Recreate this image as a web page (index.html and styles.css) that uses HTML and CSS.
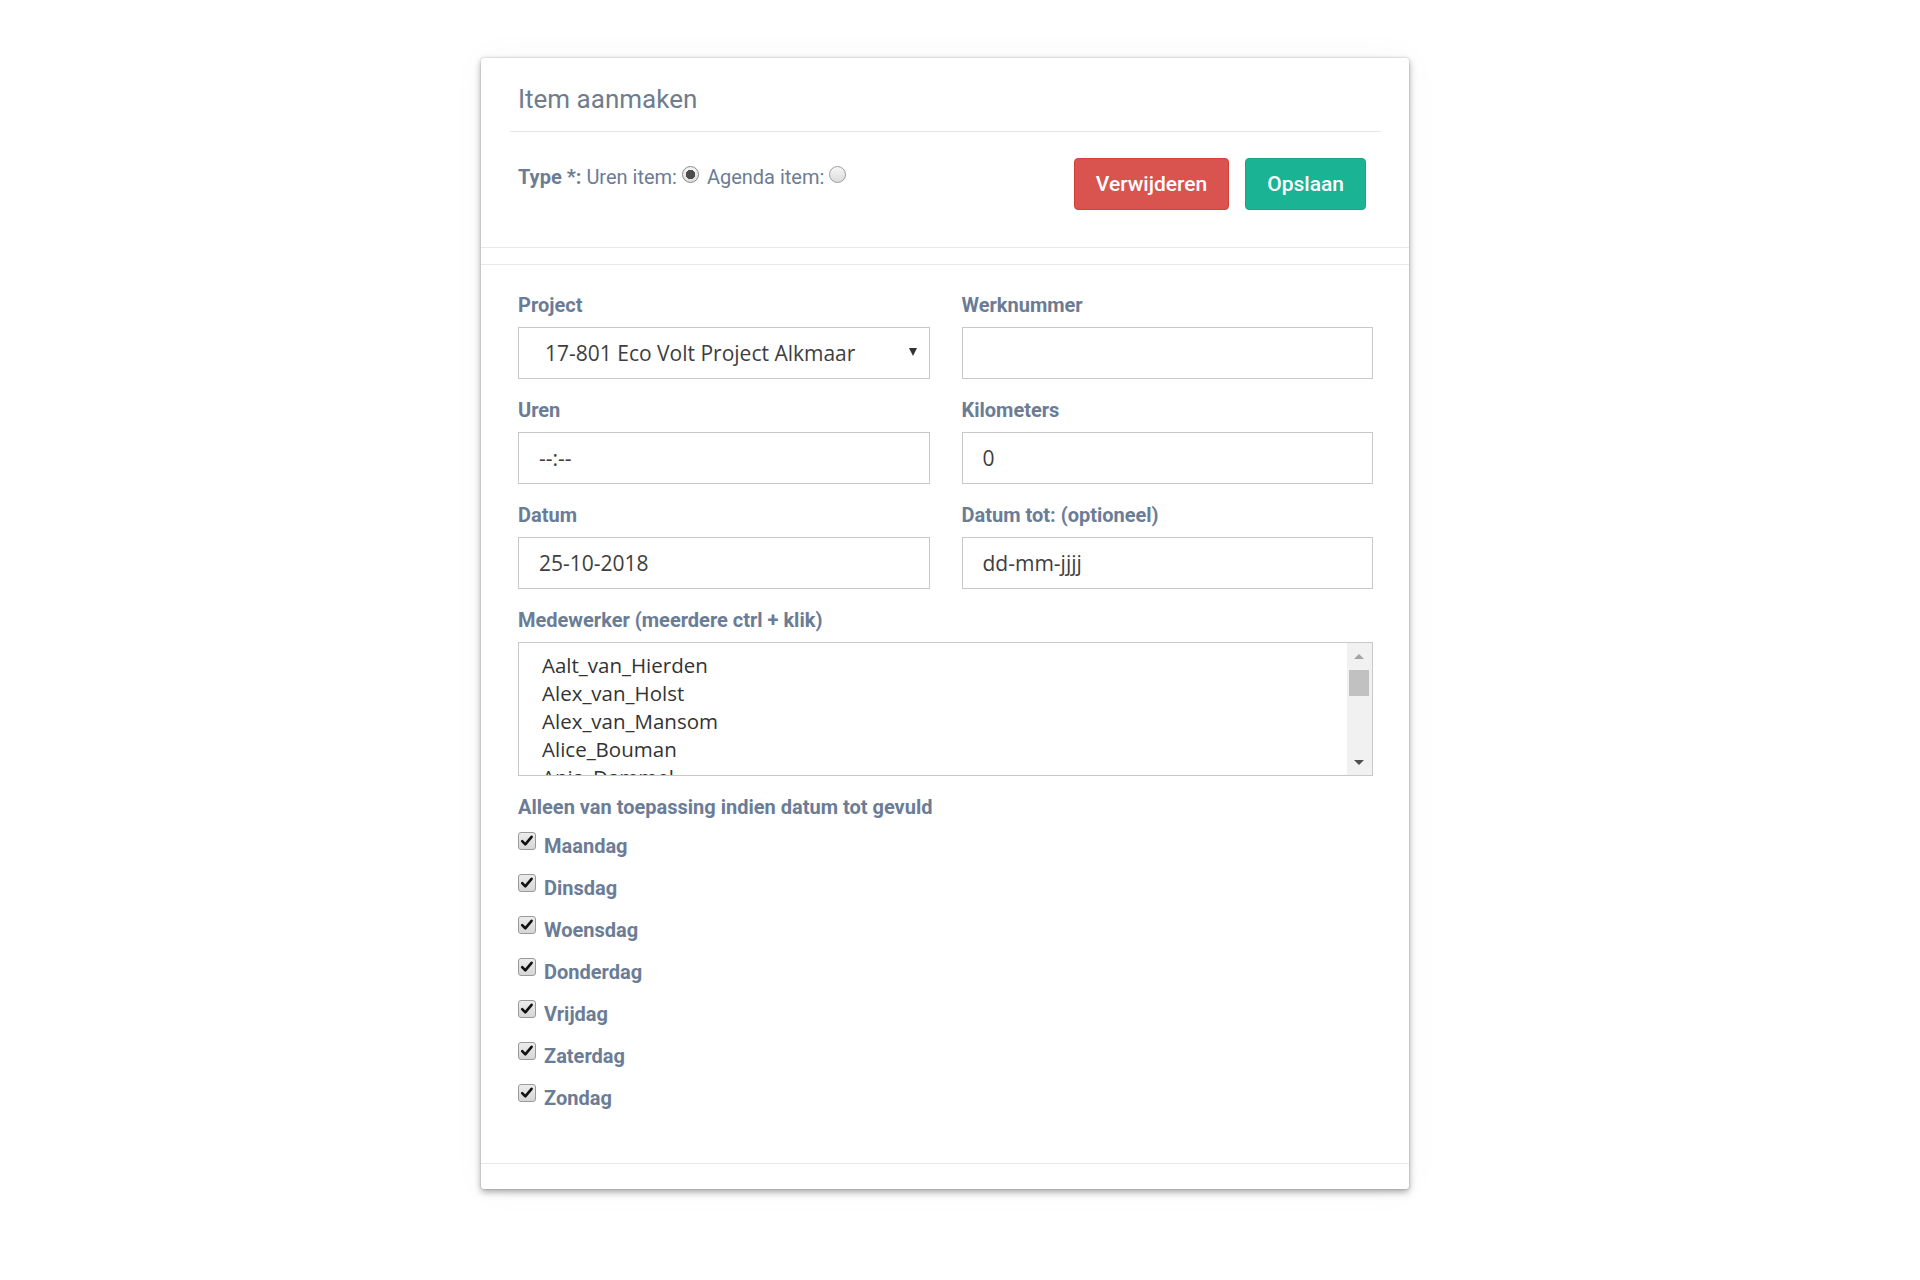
FILE: index.html
```html
<!DOCTYPE html>
<html lang="nl">
<head>
  <meta charset="UTF-8" />
  <meta name="viewport" content="width=device-width, initial-scale=1" />
  <title>Item aanmaken</title>
  <link rel="stylesheet" href="styles.css">
</head>
<body>
  <div class="page">
    <main class="card" aria-label="Item aanmaken">
      <section class="card-head">
        <h5 class="card-title">Item aanmaken</h5>
        <div class="type-row">
          <div class="type-choice">
            <b>Type *:</b> Uren item: <input type="radio" name="type" class="radio" checked aria-label="Uren item"> Agenda item: <input type="radio" name="type" class="radio" aria-label="Agenda item">
          </div>
          <div class="actions">
            <button type="button" class="btn btn-danger">Verwijderen</button>
            <button type="button" class="btn btn-primary">Opslaan</button>
          </div>
        </div>
      </section>

      <section class="card-body">
        <div class="form-grid">
          <div class="field">
            <label class="label">Project</label>
            <div class="select" role="combobox" aria-expanded="false">
              <span>17-801 Eco Volt Project Alkmaar</span>
              <span class="caret"></span>
            </div>
          </div>
          <div class="field">
            <label class="label" for="werknummer">Werknummer</label>
            <input class="input" id="werknummer" type="text" value="">
          </div>

          <div class="field">
            <label class="label" for="uren">Uren</label>
            <input class="input" id="uren" type="text" value="--:--">
          </div>
          <div class="field">
            <label class="label" for="km">Kilometers</label>
            <input class="input" id="km" type="text" value="0">
          </div>

          <div class="field">
            <label class="label" for="datum">Datum</label>
            <input class="input" id="datum" type="text" value="25-10-2018">
          </div>
          <div class="field">
            <label class="label" for="datum-tot">Datum tot: (optioneel)</label>
            <input class="input" id="datum-tot" type="text" value="dd-mm-jjjj">
          </div>
        </div>

        <div class="field">
          <label class="label">Medewerker (meerdere ctrl + klik)</label>
          <div class="listbox" role="listbox" aria-multiselectable="true">
            <div class="options">
              <div class="option">Aalt_van_Hierden</div>
              <div class="option">Alex_van_Holst</div>
              <div class="option">Alex_van_Mansom</div>
              <div class="option">Alice_Bouman</div>
              <div class="option">Anja_Dammel</div>
            </div>
            <div class="scrollbar" aria-hidden="true">
              <div class="scroll-btn"><span class="tri-up"></span></div>
              <div class="thumb"></div>
              <div class="track"></div>
              <div class="scroll-btn"><span class="tri-down"></span></div>
            </div>
          </div>
        </div>

        <div class="days">
          <div class="label">Alleen van toepassing indien datum tot gevuld</div>
          <label class="day"><span class="check"><svg viewBox="0 0 18 18" width="18" height="18"><path d="M4.2 9.2 L7.3 12.4 L13.6 4.8" /></svg></span>Maandag</label>
          <label class="day"><span class="check"><svg viewBox="0 0 18 18" width="18" height="18"><path d="M4.2 9.2 L7.3 12.4 L13.6 4.8" /></svg></span>Dinsdag</label>
          <label class="day"><span class="check"><svg viewBox="0 0 18 18" width="18" height="18"><path d="M4.2 9.2 L7.3 12.4 L13.6 4.8" /></svg></span>Woensdag</label>
          <label class="day"><span class="check"><svg viewBox="0 0 18 18" width="18" height="18"><path d="M4.2 9.2 L7.3 12.4 L13.6 4.8" /></svg></span>Donderdag</label>
          <label class="day"><span class="check"><svg viewBox="0 0 18 18" width="18" height="18"><path d="M4.2 9.2 L7.3 12.4 L13.6 4.8" /></svg></span>Vrijdag</label>
          <label class="day"><span class="check"><svg viewBox="0 0 18 18" width="18" height="18"><path d="M4.2 9.2 L7.3 12.4 L13.6 4.8" /></svg></span>Zaterdag</label>
          <label class="day"><span class="check"><svg viewBox="0 0 18 18" width="18" height="18"><path d="M4.2 9.2 L7.3 12.4 L13.6 4.8" /></svg></span>Zondag</label>
        </div>
      </section>

      <div class="card-foot"></div>
    </main>
  </div>
</body>
</html>
```

FILE: styles.css
```css
/* Base */
*, *::before, *::after {
  box-sizing: border-box;
}
body {
  margin: 0;
  background: #fff;
  font-family: Roboto, "Liberation Sans", Arial, sans-serif;
  color: #6b7c96;
}
.page {
  padding: 58px 0 80px 481px;
}

/* Card */
.card {
  width: 928px;
  background: #fff;
  border-radius: 3px;
  box-shadow: 0 3px 7px rgba(0, 0, 0, 0.35), 0 0 2px rgba(0, 0, 0, 0.25), 0 0 40px rgba(0, 0, 0, 0.03);
}
.card-head {
  padding-top: 25px;
  border-bottom: 1px solid #e7eaec;
}
.card-title {
  margin: 0 28px 0 29px;
  padding: 0 0 16px 8px;
  font-size: 26px;
  line-height: 32px;
  font-weight: 400;
  color: #6f7c8d;
  border-bottom: 1px solid #e3e6ea;
}
.type-row {
  display: flex;
  justify-content: space-between;
  align-items: flex-start;
  margin-top: 26px;
  padding: 0 43px 37px 37px;
}
.type-choice {
  margin-top: 4px;
  font-size: 20px;
  line-height: 30px;
  color: #6b7c96;
}
.type-choice b {
  font-weight: 700;
}
.radio {
  appearance: none;
  -webkit-appearance: none;
  display: inline-block;
  width: 17px;
  height: 17px;
  margin: 0 3px 0 0;
  vertical-align: 1px;
  border: 1px solid #9c9c9c;
  border-radius: 50%;
  background: linear-gradient(#f6f6f6, #dcdcdc);
}
.radio:checked {
  border-color: #8a8a8a;
  background: radial-gradient(circle, #4d4d4d 0, #4d4d4d 4px, #5a5a5a 4.5px, transparent 5px), linear-gradient(#f6f6f6, #dedede);
}
.actions {
  display: flex;
  gap: 16px;
}
.btn {
  height: 52px;
  padding: 0 21px;
  border: 1px solid transparent;
  border-radius: 4px;
  font-family: Roboto, "Liberation Sans", Arial, sans-serif;
  font-size: 21px;
  font-weight: 500;
  color: #fff;
  cursor: pointer;
}
.btn-danger {
  background: #d9534f;
  border-color: #d43f3a;
}
.btn-primary {
  background: #1ab394;
  border-color: #18a689;
}

/* Body */
.card-body {
  margin-top: 16px;
  padding: 28px 36px 50px 37px;
  border-top: 1px solid #e7eaec;
  border-bottom: 1px solid #e7eaec;
}
.form-grid {
  display: grid;
  grid-template-columns: 1fr 1fr;
  column-gap: 32px;
}
.field {
  display: flex;
  flex-direction: column;
  margin-bottom: 19px;
}
.label {
  display: block;
  margin-bottom: 10px;
  font-size: 20px;
  line-height: 24px;
  font-weight: 700;
  color: #6b7c96;
}
.input,
.select {
  width: 100%;
  height: 52px;
  border: 1px solid #c9c9c9;
  background: #fff;
  font-family: "Open Sans", "Noto Sans", sans-serif;
  font-size: 21px;
  color: #3e3e3e;
}
.input {
  padding: 0 20px;
  outline: none;
}
.select {
  display: flex;
  align-items: center;
  justify-content: space-between;
  padding: 0 12px 0 26px;
}
.caret {
  width: 0;
  height: 0;
  border-left: 4.5px solid transparent;
  border-right: 4.5px solid transparent;
  border-top: 8px solid #333;
  margin-top: -2px;
}

/* Multi select */
.listbox {
  display: flex;
  height: 134px;
  border: 1px solid #c9c9c9;
  background: #fff;
}
.options {
  flex: 1;
  overflow: hidden;
  padding: 8px 0 0 23px;
  font-family: "Open Sans", "Noto Sans", sans-serif;
  font-size: 20.5px;
  line-height: 28px;
  color: #333;
}
.scrollbar {
  width: 25px;
  display: flex;
  flex-direction: column;
  background: #f1f1f1;
  padding: 0 3px 0 2px;
}
.scroll-btn {
  height: 26px;
  display: flex;
  align-items: center;
  justify-content: center;
}
.tri-up {
  border-left: 5px solid transparent;
  border-right: 5px solid transparent;
  border-bottom: 5px solid #a3a3a3;
}
.tri-down {
  border-left: 5px solid transparent;
  border-right: 5px solid transparent;
  border-top: 5px solid #4f4f4f;
}
.thumb {
  height: 26px;
  margin-top: 1px;
  background: #c1c1c1;
}
.track {
  flex: 1;
}

/* Weekdays */
.days .label {
  margin-bottom: 8px;
}
.day {
  display: flex;
  align-items: flex-start;
  gap: 8px;
  height: 30px;
  margin-top: 12px;
  font-size: 20px;
  line-height: 30px;
  font-weight: 700;
  color: #6b7c96;
}
.check {
  width: 18px;
  height: 18px;
  margin-top: 1px;
  border: 1px solid #9a9a9a;
  border-radius: 3px;
  background: linear-gradient(#ececec, #d6d6d6);
  display: flex;
}
.check svg {
  margin: -1px;
}
.check path {
  fill: none;
  stroke: #111;
  stroke-width: 2.6;
  stroke-linecap: round;
  stroke-linejoin: round;
}
.card-foot {
  height: 25px;
}
```
